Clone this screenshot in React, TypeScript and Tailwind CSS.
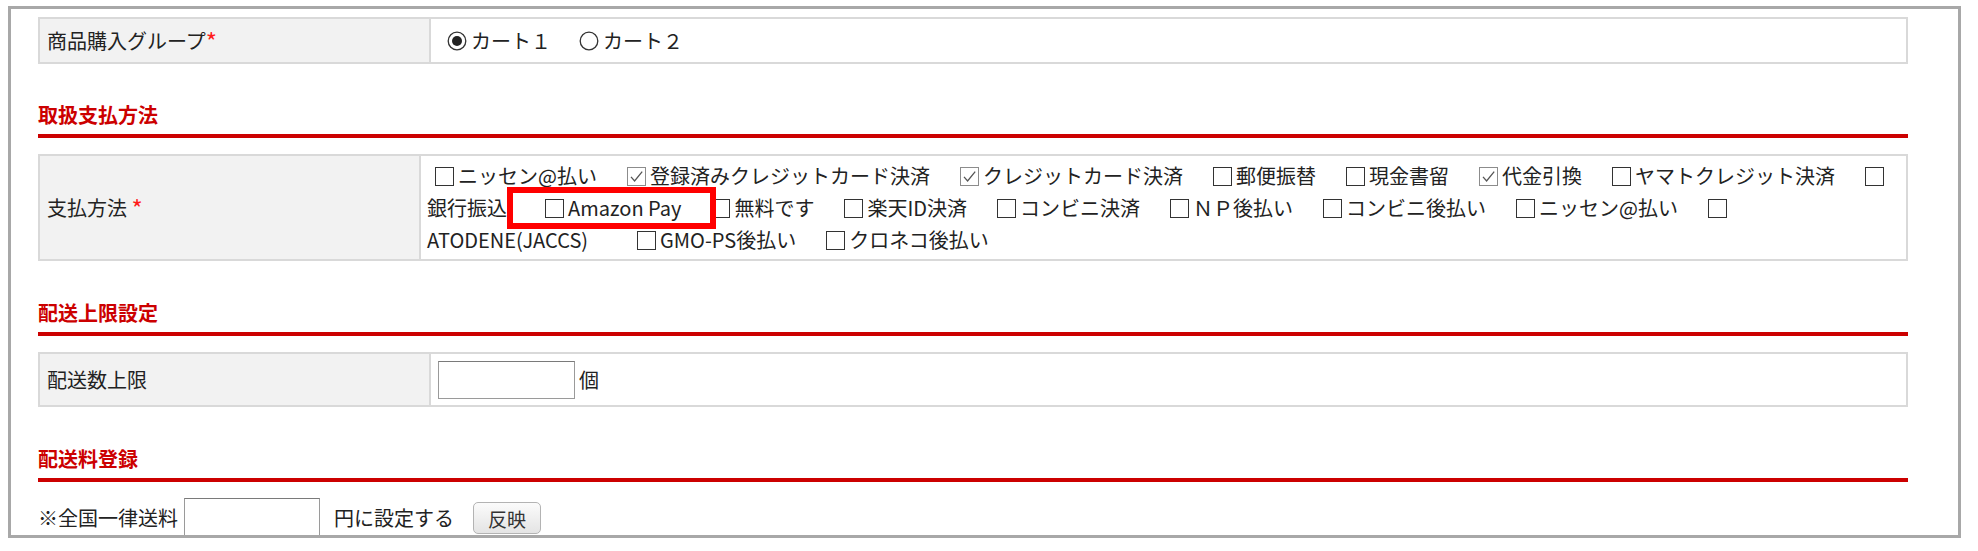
import React from 'react'

function Box({ checked = false }: { checked?: boolean }) {
    return (
        <svg width="19" height="19" viewBox="0 0 19 19" className="shrink-0">
            <rect x="0.5" y="0.5" width="18" height="18" fill="#fff" stroke={checked ? '#8c8c8c' : '#333'} />
            {checked && <path d="M4 9.8l3.6 4.2L15.2 4.6" fill="none" stroke="#555" strokeWidth="1.3" />}
        </svg>
    )
}

function Radio({ checked = false }: { checked?: boolean }) {
    return (
        <svg width="20" height="20" viewBox="0 0 20 20" className="shrink-0">
            <circle cx="10" cy="10" r="8.8" fill="#fff" stroke="#333" strokeWidth="1.3" />
            {checked && <circle cx="10" cy="10" r="5" fill="#222" />}
        </svg>
    )
}

function Opt({ label, checked = false }: { label?: string; checked?: boolean }) {
    return (
        <span className="ml-[8px] mr-[22px] inline-flex items-center">
            <Box checked={checked} />
            {label && <span className="ml-[4px]">{label}</span>}
        </span>
    )
}

function Heading({ title, top }: { title: string; top: string }) {
    return (
        <div className={`${top} mb-[16px] border-b-4 border-[#cc0000] pb-[5px] text-[20px] leading-[28px] font-bold text-[#cc0000]`}>
            {title}
        </div>
    )
}

function Req() {
    return <span className="text-[24px] leading-none text-[#ff1a1a]">*</span>
}

export default function App() {
    return (
        <div className="min-h-screen bg-white font-['Noto_Sans_CJK_JP','Noto_Sans',sans-serif] text-[20px] text-[#222]">
            <div className="ml-[8px] mt-[6px] h-[532px] w-[1953px] overflow-hidden border-[3px] border-[#a8a8a8] pl-[27px] pr-[50px] pt-[8px]">
                {/* 商品購入グループ */}
                <div className="flex h-[47px] border-2 border-[#d9d9d9]">
                    <div className="flex w-[391px] items-center border-r-2 border-[#d9d9d9] bg-[#f2f2f2] pl-[7px]">
                        商品購入グループ<Req />
                    </div>
                    <div className="flex flex-1 items-center pl-[6px] leading-[32px]">
                        <span className="ml-[10px] mr-[18px] inline-flex items-center">
                            <Radio checked />
                            <span className="ml-[4px]">カート１</span>
                        </span>
                        <span className="ml-[10px] inline-flex items-center">
                            <Radio />
                            <span className="ml-[4px]">カート２</span>
                        </span>
                    </div>
                </div>

                <Heading title="取扱支払方法" top="mt-[37px]" />

                {/* 支払方法 */}
                <div className="flex border-2 border-[#d9d9d9]">
                    <div className="flex w-[391px] items-center border-r-2 border-[#d9d9d9] bg-[#f2f2f2] pl-[7px]">
                        支払方法&nbsp;<Req />
                    </div>
                    <div className="flex-1 pb-[3px] pl-[6px] pt-[4px] leading-[32px] whitespace-nowrap">
                        <div className="flex h-[32px] items-center">
                            <Opt label="ニッセン@払い" />
                            <Opt label="登録済みクレジットカード決済" checked />
                            <Opt label="クレジットカード決済" checked />
                            <Opt label="郵便振替" />
                            <Opt label="現金書留" />
                            <Opt label="代金引換" checked />
                            <Opt label="ヤマトクレジット決済" />
                            <Opt />
                        </div>
                        <div className="flex h-[32px] items-center">
                            <span className="mr-[30px]">銀行振込</span>
                            <span className="relative ml-[8px] mr-[22px] inline-flex items-center">
                                <Box />
                                <span className="ml-[4px]">Amazon Pay</span>
                                <span className="pointer-events-none absolute -left-[38px] -top-[5px] z-10 h-[42px] w-[209px] border-[6px] border-[#ff0000]" />
                            </span>
                            <Opt label="無料です" />
                            <Opt label="楽天ID決済" />
                            <Opt label="コンビニ決済" />
                            <Opt label="ＮＰ後払い" />
                            <Opt label="コンビニ後払い" />
                            <Opt label="ニッセン@払い" />
                            <Opt />
                        </div>
                        <div className="flex h-[32px] items-center">
                            <span className="mr-[41px]">ATODENE(JACCS)</span>
                            <Opt label="GMO-PS後払い" />
                            <Opt label="クロネコ後払い" />
                        </div>
                    </div>
                </div>

                <Heading title="配送上限設定" top="mt-[38px]" />

                {/* 配送数上限 */}
                <div className="flex h-[55px] border-2 border-[#d9d9d9]">
                    <div className="flex w-[391px] items-center border-r-2 border-[#d9d9d9] bg-[#f2f2f2] pl-[7px]">
                        配送数上限
                    </div>
                    <div className="flex flex-1 items-center pl-[7px]">
                        <input className="h-[38px] w-[137px] border border-[#9a9a9a] border-t-[#7a7a7a] bg-white" />
                        <span className="ml-[4px]">個</span>
                    </div>
                </div>

                <Heading title="配送料登録" top="mt-[38px]" />

                {/* 全国一律送料 */}
                <div className="flex h-[40px] items-center">
                    <span>※全国一律送料</span>
                    <input className="ml-[6px] h-[40px] w-[136px] border border-[#9a9a9a] border-t-[#7a7a7a] bg-white" />
                    <span className="ml-[14px]">円に設定する</span>
                    <button className="ml-[19px] h-[32px] w-[68px] rounded-[5px] border border-[#b3b3b3] bg-gradient-to-b from-[#fbfbfb] to-[#e4e4e4] text-[19px] leading-none text-[#333]">
                        反映
                    </button>
                </div>
            </div>
        </div>
    )
}
